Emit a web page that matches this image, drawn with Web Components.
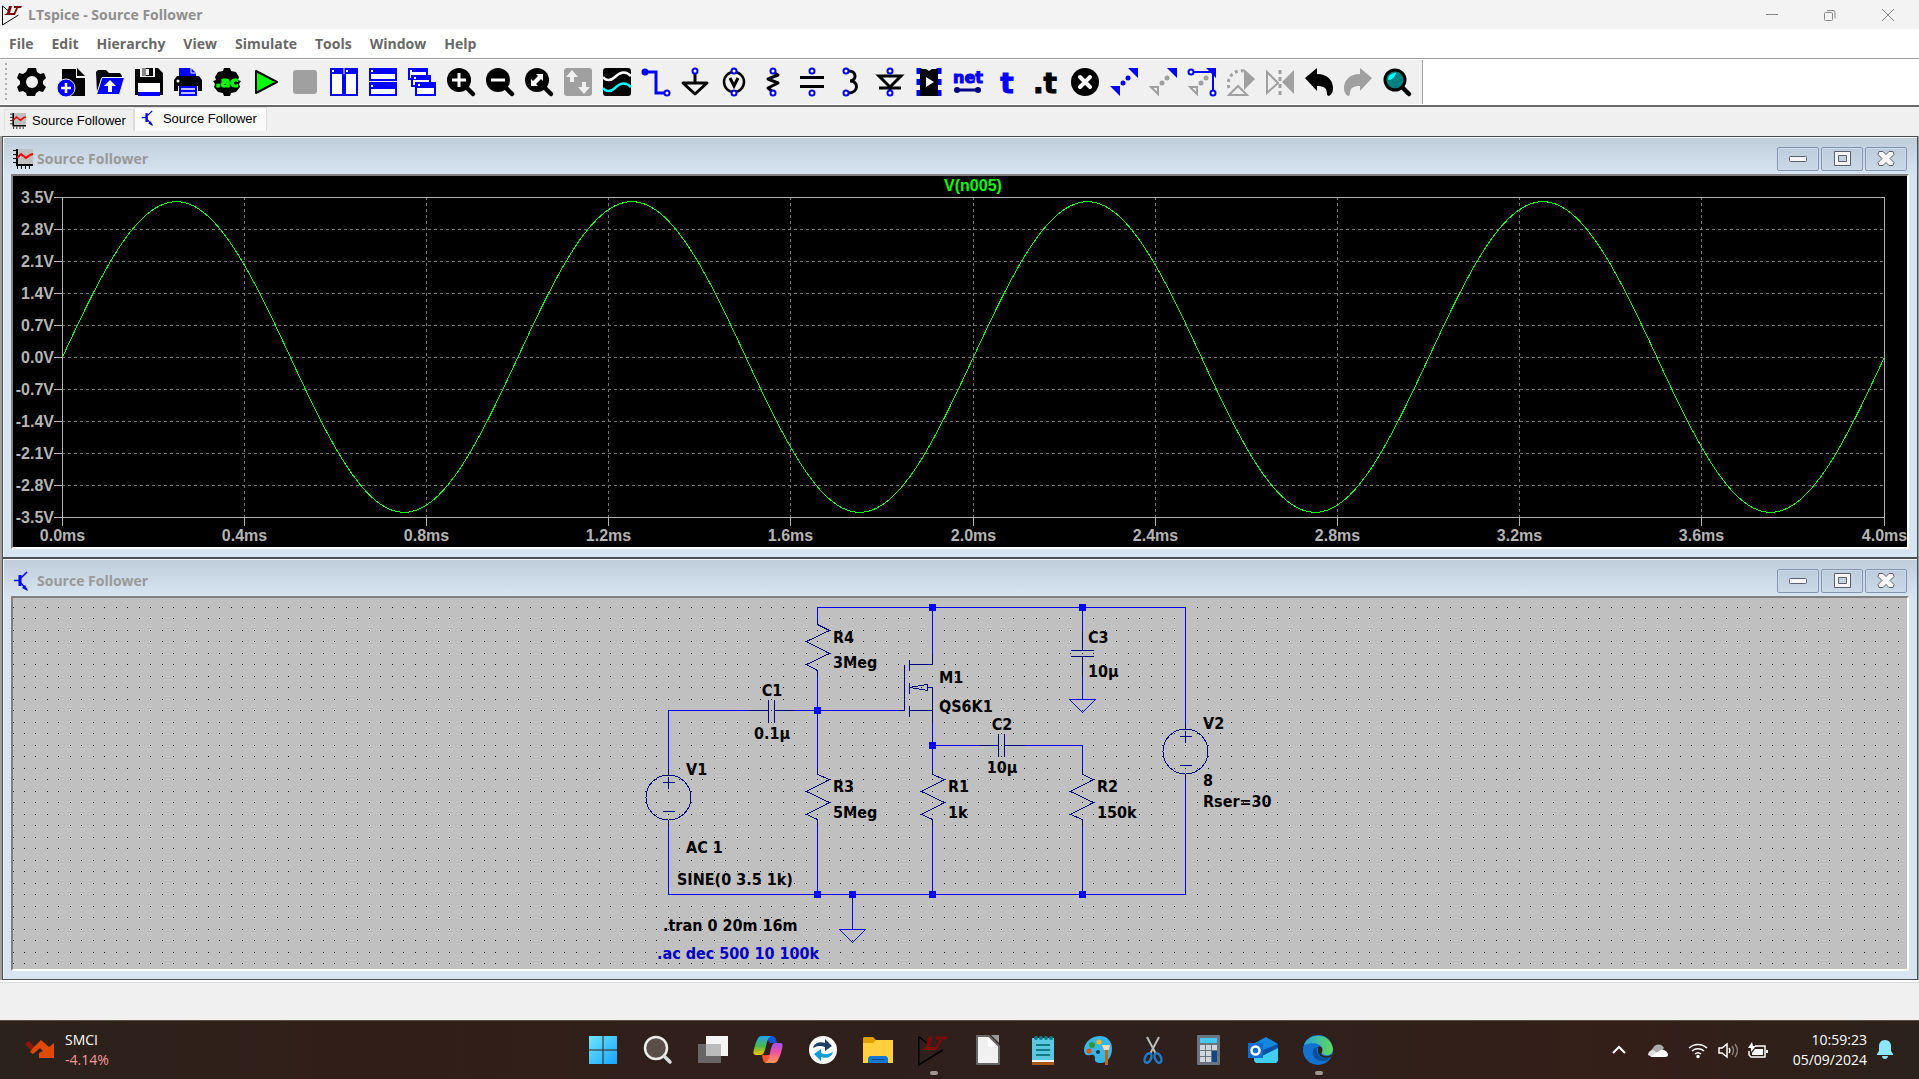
<!DOCTYPE html>
<html lang="en">
<head>
<meta charset="utf-8">
<title>LTspice - Source Follower</title>
<style>
    html, body {
        margin: 0;
        height: 100%;
        overflow: hidden;
    }
    body {
        display: flex;
        flex-direction: column;
        background: #f0f0f0;
        font: 700 14px "Open Sans", "Noto Sans", sans-serif;
    }
    main {
        flex: 1;
        min-height: 0;
        display: flex;
        flex-direction: column;
        padding: 0 1px 0 2px;
        background: #a0a0a0;
    }
    mdi-window {
        flex: 1;
        min-height: 0;
    }
</style>
</head>
<body>
<title-bar>LTspice - Source Follower</title-bar>
<menu-bar></menu-bar>
<tool-bar></tool-bar>
<tab-strip></tab-strip>
<main>
    <mdi-window icon="wave" caption="Source Follower"><wave-plot></wave-plot></mdi-window>
    <mdi-window icon="bjt" caption="Source Follower"><spice-schematic></spice-schematic></mdi-window>
</main>
<status-bar></status-bar>
<task-bar></task-bar>

<script>
const pin = (x, y) => `<circle cx="${x}" cy="${y}" r="2.5" fill="#fff" stroke="#00f" stroke-width="2"/>`
const dot = (x, y, r = 2.5) => `<circle cx="${x}" cy="${y}" r="${r}"/>`
const lens = `<circle cx="12" cy="12" r="12"/><path d="M19 19l7 7" stroke="#000" stroke-width="4.5" stroke-linecap="round"/>`
const glyph = (x, y, size, fill, text) =>
    `<text x="${x}" y="${y}" fill="${fill}" stroke="${fill}" stroke-width="1" text-anchor="middle" font-family="DejaVu Sans" font-weight="700" font-size="${size}">${text}</text>`

// toolbar icons, 28 x 28
const TOOLS = [
    ["Settings", `<path fill-rule="evenodd" d="M10 0h8l1 4 3 2 4-1 2 5-3 3v3l3 3-3 5-4-1-3 2-1 3h-8l-1-3-3-2-4 1-2-5 3-3v-3l-3-3 2-5 4 1 3-2zM14 8a6 6 0 1 0 0 12 6 6 0 0 0 0-12z"/>`],
    ["New schematic", `<path d="M5 1h14v9h9v18H5z"/><path d="M20 0l8 8h-8z"/><circle cx="9" cy="20" r="9" fill="#00f" stroke="#f0f0f0"/><path d="M9 15v10M4 20h10" stroke="#fff" stroke-width="2.5"/>`],
    ["Open", `<path d="M0 4l2-2h8l3 3h11l2 3v3H5L1 24z"/><path fill="#00f" stroke="#f0f0f0" d="M6 9.5h22.500l-5 17H.5z"/><path fill="#fff" d="M14 12l6 6h-4v6h-4v-6H8z"/>`],
    ["Save", `<path d="M0 1h5v8h15V0h3l5 5v22H0z"/><path fill="#888" d="M7 0h4v8H7z"/><path d="M11 0h7v8h-7z"/><path fill="#f0f0f0" d="M11 1h3v6h-3z"/><path fill="#fff" d="M3 15h22v9H3z"/><path fill="#00f" d="M3 24h22v4H3z"/>`],
    ["Print", `<path fill="#00f" d="M5 0h12l5 5v4H5z"/><path stroke="#fff" d="M17 0v5h5" fill="none"/><path d="M3 8h22l3 4v11h-4v-5H4v5H0V12z"/><circle cx="4" cy="13" r="1.5" fill="#fff"/><path fill="#00f" d="M5 18h18v10H5z"/><path stroke="#fff" stroke-width="1.5" d="M7 21h14M7 25h14"/>`],
    ["Simulation", `<path d="M11 0h6l1 3 5 1 3 5-1 3 3 1-2 3 1 3-4 5-5 1-1 3h-6l-1-3-5-1-4-5 1-3-2-3 3-1-1-3 3-5 5-1z"/>` + glyph(14, 19, 14, "#0f0", ".ac")],
    ["Run", `<path fill="#0f0" stroke="#000" stroke-width="2" stroke-linejoin="round" d="M4 3v22l21-11z"/>`],
    ["Stop", `<rect x="2" y="2" width="24" height="24" rx="3" fill="#a0a0a0"/>`],
    ["Tile vertically", `<path fill="#fff" stroke="#00f" stroke-width="2" d="M1 5h12v22H1zM15 5h12v22H15z"/><path fill="#00f" d="M0 0h28v6H0z"/><path fill="#fff" d="M2 2h2v2H2zM16 2h2v2h-2zM13.5 0h1v6h-1z"/>`],
    ["Tile horizontally", `<path fill="#fff" stroke="#00f" stroke-width="2" d="M1 1h26v11H1zM1 16h26v11H1z"/><path fill="#00f" d="M0 0h28v6H0zM0 14h28v7H0z"/><path fill="#fff" d="M2 2h2v2H2zM2 17h2v2H2z"/>`],
    ["Cascade", `<g fill="#fff" stroke="#00f" stroke-width="2"><path d="M1 1h18v10H1z"/><path d="M4 8h18v10H4z"/><path d="M8 15h19v12H8z"/></g><path fill="#00f" d="M0 0h20v4H0zM3 7h20v5H3zM7 14h21v6H7z"/><path fill="#fff" d="M2 2h2v2H2zM6 9h2v2H6zM10 16h2v2h-2z"/>`],
    ["Zoom in", lens + `<path d="M12 5v14M5 12h14" stroke="#fff" stroke-width="3"/>`],
    ["Zoom out", lens + `<path d="M5 12h14" stroke="#fff" stroke-width="3"/>`],
    ["Zoom to fit", lens + `<path fill="#fff" d="M11 6h7v7l-2-2-5 5 2 2H6v-7l2 2 5-5z"/>`],
    ["Autorange", `<rect width="28" height="28" rx="3" fill="#a0a0a0"/><path fill="#f0f0f0" d="M8 2l6 7h-4v5H6V9H2zM20 26l-6-7h4v-5h4v5h4z"/>`],
    ["Waveforms", `<rect width="28" height="28" rx="3"/><path fill="none" stroke="#fff" stroke-width="2.5" d="M0 9c3 4 8 4 12 0s10-7 16-1"/><path fill="none" stroke="#0ff" stroke-width="2.5" d="M0 20c3 4 8 4 12 0s10-7 16-1"/>`],
    ["Wire", `<path fill="none" stroke="#00f" stroke-width="3" d="M3 4h11v21h10"/><g fill="#00f">${dot(3, 4, 3.5)}</g>` + pin(25, 25)],
    ["Ground", `<path fill="none" stroke="#000" stroke-width="3" d="M14 4v10M2 15h24L14 26z" stroke-linejoin="round"/>` + pin(14, 3)],
    ["Voltage", `<circle cx="14" cy="14" r="10" fill="none" stroke="#000" stroke-width="2.5"/><path d="M10 10l4 8 4-8" fill="none" stroke="#000" stroke-width="3"/>` + pin(14, 3) + pin(14, 25)],
    ["Resistor", `<path fill="none" stroke="#000" stroke-width="3" stroke-linejoin="round" d="M14 4l5 3-10 4 10 4-10 5 5 4"/>` + pin(14, 3) + pin(14, 25)],
    ["Capacitor", `<path stroke="#000" stroke-width="3" d="M2 9.5h24M2 18.5h24"/>` + pin(14, 3) + pin(14, 25)],
    ["Inductor", `<path fill="none" stroke="#000" stroke-width="3" d="M11 3c9-1 9 10 2 10 9 0 9 12-2 12"/>` + pin(9, 3) + pin(9, 25)],
    ["Diode", `<path fill="none" stroke="#000" stroke-width="3" d="M3 8h22L14 19zM3 20h22M14 20v5"/>` + pin(14, 3) + pin(14, 25)],
    ["Component", `<path fill="none" stroke="#00f" stroke-width="5" stroke-dasharray="6 5" d="M4 0v28M24 0v28"/><path d="M5 1h6l3 2 3-2h6v27H5z"/><path fill="#fff" d="M11 9l8 5-8 5z"/>`],
    ["Label net", glyph(14, 15, 16, "#00f", "net") + `<path stroke="#000080" stroke-width="3" d="M2 22h24"/><g fill="#000080">${dot(3, 22, 3)}${dot(24, 22, 3)}</g>`],
    ["Text", glyph(14, 25, 28, "#00f", "t")],
    ["SPICE directive", glyph(13, 25, 28, "#000", ".t")],
    ["Delete", `<circle cx="14" cy="14" r="14"/><path stroke="#fff" stroke-width="4" stroke-linecap="round" d="M9 9l10 10M19 9L9 19"/>`],
    ["Move", `<g fill="#00f"><path d="M18 0h10v10zM0 18h10v10z"/>${dot(18, 10)}${dot(13, 15)}</g>`],
    ["Copy", `<g fill="#a0a0a0"><path fill="#00f" d="M18 0h10v10z"/><path fill="none" stroke="#a0a0a0" stroke-width="2" d="M2 19h7v7z"/>${dot(18, 10)}${dot(13, 15)}</g>`],
    ["Drag", `<g fill="#a0a0a0"><path fill="#00f" d="M18 0h10v10z"/><path fill="none" stroke="#a0a0a0" stroke-width="2" d="M2 19h7v7z"/>${dot(18, 10)}${dot(13, 15)}</g><path fill="none" stroke="#00f" stroke-width="2" d="M3 4h22v21"/>` + pin(3, 4) + pin(25, 25)],
    ["Rotate", `<g fill="none" stroke="#a0a0a0" stroke-width="3"><path d="M2 20a13 13 0 0 1 15-17" stroke-dasharray="3 3"/><path stroke-width="2" d="M2 27l9-9 9 9z"/></g><path fill="#a0a0a0" d="M17 1l11 10-11 11z"/>`],
    ["Mirror", `<path fill="none" stroke="#a0a0a0" stroke-width="2" d="M1 4v21l11-10z"/><path fill="#a0a0a0" d="M28 2v24L16 14z"/><path stroke="#a0a0a0" stroke-width="3" stroke-dasharray="4 3" d="M14 2v25"/>`],
    ["Undo", `<path d="M0 10L12 0v6c11 0 16 7 16 14 0 4-1 6-4 8-1 0-2-1-2-2 0-6-3-8-10-8v5z"/>`],
    ["Redo", `<path fill="#a0a0a0" d="M28 10L16 0v6C5 6 0 13 0 20c0 4 1 6 4 8 1 0 2-1 2-2 0-6 3-8 10-8v5z"/>`],
    ["Find", `<path d="M19 19l7 7" stroke="#000" stroke-width="4.5" stroke-linecap="round"/><circle cx="12" cy="12" r="10" fill="#008080" stroke="#000" stroke-width="3"/><path fill="#0ff" d="M5 12c0-5 4-7 8-7-1 4-4 7-8 7z"/>`],
]

const LOGO = `<path fill="none" stroke="#000" d="M.5 1v19l16-10M.5 1l6 5"/><path fill="#7a0a0a" d="M7 1h3L8 8h4l-1 2H2l3-2zM12 1h8l-1 2h-3l-3 7h-2l3-7h-2z"/>`

// 20 x 20 document icons
const DOCS = {
    wave: `<path fill="#c0c0c0" d="M3 0h17v16H3z"/><path fill="none" stroke="#000" stroke-width="2" d="M4 0v16h16"/><path stroke="#000" d="M0 1.5h3M0 5.5h3M0 9.5h3M0 13.5h3M4.5 17v3M8.5 17v3M12.5 17v3M16.5 17v3"/><path fill="none" stroke="#f00" stroke-width="2" d="M4 9l4-4 5 4 4-3 3-1"/>`,
    bjt: `<g fill="none" stroke="#00f" stroke-width="1.5"><path stroke-width="3" d="M7 4v11"/><path d="M1 9.5h6M8 7l6-6M8 12l6 7"/></g><path fill="#00f" d="M15 20l-6-3 3-3z"/>`,
}

// 30 x 30 taskbar icons
const APPS = [
    ["Start", `<defs><linearGradient id="a" x2="1" y2="1"><stop stop-color="#6ee7ff"/><stop offset="1" stop-color="#17a3ff"/></linearGradient></defs><path fill="url(#a)" d="M1 1h13.500v13.500H1zM15.500 1H29v13.500H15.500zM1 15.500h13.500V29H1zM15.500 15.500H29V29H15.500z"/>`],
    ["Search", `<circle cx="13" cy="13" r="11" fill="#5a4d4a" stroke="#eee" stroke-width="2.5"/><path stroke="#d8dde0" stroke-width="3.5" stroke-linecap="round" d="M21 21l6 6"/>`],
    ["Task view", `<path fill="#666" d="M0 9h23v19H0z"/><path fill="#f4f4f4" d="M8 1h22v20H8z"/><path fill="#bbb" d="M8 9h15v12H8z"/>`],
    ["Copilot", `<defs><linearGradient id="b" x2="0" y2="1"><stop stop-color="#1da5ef"/><stop offset=".55" stop-color="#4cb84a"/><stop offset="1" stop-color="#ffc400"/></linearGradient><linearGradient id="c" x2="0" y2="1"><stop stop-color="#a64df0"/><stop offset=".5" stop-color="#f0569a"/><stop offset="1" stop-color="#ff9a55"/></linearGradient></defs><path fill="#1554d8" d="M12 1h7c3 0 4 3 5 7h-7z"/><path fill="#f4532f" d="M9 20h9l-4 8c-4 0-4-3-5-8z"/><path fill="url(#b)" d="M9 1h9c-3 1-4 6-5 10s-2 9-5 9H3c-3 0-3-2-2-6s2-7 3-9 2-4 5-4z"/><path fill="url(#c)" d="M21 28h-9c3-1 4-6 5-10s2-10 5-10h5c3 0 3 2 2 6s-2 7-3 9-2 5-5 5z"/>`],
    ["Sync", `<circle cx="15" cy="15" r="14" fill="#fff"/><path fill="#1c3f66" d="M5 13c1-5 7-7 12-5V4l7 7-7 5v-4c-5-2-8-1-12 1z"/><path fill="#109bdc" d="M25 17c-1 5-7 7-12 5v4l-7-7 7-5v4c5 2 8 1 12-1z"/>`],
    ["File Explorer", `<path fill="#e0a000" d="M0 3l1-1h9l3 3h15v5H0z"/><path fill="#ffcf3d" d="M0 8h10l3-3h17v23H0z"/><path fill="#0f78d4" d="M5 28v-5l2-2h16l2 2v5z"/><path stroke="#084a8e" d="M9 24.500h12"/>`],
    ["LTspice", `<g transform="scale(1.5)">${LOGO}</g>`, true],
    ["LibreOffice", `<path fill="#f1f1f1" stroke="#666" stroke-width="2" stroke-linejoin="round" d="M4 1h12l10 10v18H4z"/><path fill="#999" d="M18 0h8v8z"/><path fill="#fff" d="M15 3v9h9z"/>`],
    ["Notepad", `<path fill="#5cc8e0" d="M4 3h22v24H4z"/><path fill="#fff" d="M4 25h22v2H4z"/><path fill="#a85a10" d="M4 27h22v3H4z"/><path stroke="#117a86" stroke-width="2" d="M8 10h14M8 15h14M8 20h14"/><g fill="#117a86">${dot(8, 3, 2)}${dot(13, 3, 2)}${dot(18, 3, 2)}${dot(23, 3, 2)}</g>`],
    ["Paint", `<path fill="#38b6e8" d="M17 1c8 0 12 6 12 13 0 8-5 14-11 14-4 0-7-1-6-5 0-3-2-4-5-3-4 1-6-1-6-5C1 7 9 1 17 1z"/><circle cx="9" cy="10" r="3" fill="#2d9c2d"/><circle cx="16" cy="7" r="2.5" fill="#ffba19"/><circle cx="6" cy="16" r="2.5" fill="#e05018"/><circle cx="15" cy="17" r="2" fill="#0a3a55"/><path fill="#b86a10" d="M22 15h3v15h-3z"/><path fill="#f2d9b8" d="M19 10h8l-1 5h-5z"/>`],
    ["Snipping Tool", `<path stroke="#bbb" stroke-width="2" d="M9 2l9 17M21 2l-9 17"/><g fill="none" stroke="#1f78c8" stroke-width="2.5"><ellipse cx="10" cy="23" rx="3" ry="5" transform="rotate(25 10 23)"/><ellipse cx="20" cy="23" rx="3" ry="5" transform="rotate(-25 20 23)"/></g>`],
    ["Calculator", `<rect x="4" width="23" height="30" rx="1" fill="#6c7480"/><path fill="#43c7f4" d="M7 3h17v5H7z"/><path fill="#cfd6dd" d="M7 10h5v5H7zM13 10h5v5h-5zM19 10h5v5h-5zM7 16h5v5H7zM13 16h5v5h-5zM7 22h5v5H7zM13 22h5v5h-5z"/><path fill="#0f4a86" d="M19 16h5v11h-5z"/>`],
    ["Outlook", `<path fill="#1388dd" d="M5 9l13-7 12 7v10H5z"/><path fill="#0b50a4" d="M10 17L30 9v8l-14 6z"/><path fill="#40cdf8" d="M6 19l8 2 16-8v13l-2 2H8l-2-2z"/><path fill="#0f6cce" d="M0 8h15v15H0z"/><circle cx="7.5" cy="15.5" r="4" fill="none" stroke="#fff" stroke-width="2.5"/>`],
    ["Edge", `<defs><linearGradient id="d" x2="1"><stop stop-color="#25a5e2"/><stop offset="1" stop-color="#62d957"/></linearGradient></defs><circle cx="15" cy="15" r="15" fill="#1173cf"/><path fill="url(#d)" d="M1 10C5-3 28-3 30 14c0 5-4 7-8 6-5-1-2-4-3-7C17 8 9 7 1 10z"/><path fill="#0c4f9e" d="M11 13c-4 7 2 14 10 13 3 0 5-2 6-4-6 2-12 0-13-5-1-2 0-3 1-5-2 0-3 0-4 1z"/><path fill="#2f201c" d="M15 12c4-2 6 3 3 7 3 3 7 3 12 0l-2 3c-6 2-13 0-13-6z"/>`, true],
]

const svg = (inner, w, h = w, vw = w, vh = h) =>
    `<svg width="${w}" height="${h}" viewBox="0 0 ${vw} ${vh}" aria-hidden="true">${inner}</svg>`

class Base extends HTMLElement {
    connectedCallback() {
        if (this.shadowRoot) return
        this.attachShadow({mode: "open"}).innerHTML = `<style>
            button { font: inherit; color: inherit; border: 0; padding: 0; background: none; }
            svg { display: block; overflow: visible; }
            ${this.css}
        </style>${this.html}`
        if (this.draw) new ResizeObserver(() => this.draw()).observe(this)
    }
}

customElements.define("title-bar", class extends Base {
    css = `
        :host { display: flex; align-items: center; height: 29px; padding: 0 2px; background: #f3f3f3; color: #8f8f8f; }
        .name { flex: 1; margin-left: 6px; }
        button { width: 58px; height: 29px; display: grid; place-items: center; }
        button svg { fill: none; stroke: #888; }
    `
    html = `${svg(LOGO, 20)}<span class="name"><slot></slot></span>
        <button aria-label="Minimize">${svg('<path d="M0 5.5h12"/>', 12)}</button>
        <button aria-label="Restore">${svg('<rect x=".5" y="3.5" width="8" height="8" rx="1"/><path d="M3 1.500h6a2 2 0 0 1 2 2v6"/>', 12)}</button>
        <button aria-label="Close">${svg('<path d="M0 0l12 12M12 0L0 12"/>', 12)}</button>`
})

customElements.define("menu-bar", class extends Base {
    css = `
        :host { display: flex; height: 29px; border-bottom: 1px solid #a0a0a0; background: #fff; color: #686868; }
        button { padding: 0 9px; }
    `
    html = ["File", "Edit", "Hierarchy", "View", "Simulate", "Tools", "Window", "Help"]
        .map(m => `<button>${m}</button>`).join("")
})

customElements.define("tool-bar", class extends Base {
    css = `
        :host { display: flex; box-sizing: border-box; height: 48px; border-top: 1px solid #fff; border-bottom: 2px solid #696969; background: #fff; }
        .strip { display: flex; align-items: center; box-sizing: border-box; height: 44px; padding: 0 6px 0 5px; background: #f0f0f0; border-right: 1px solid #a0a0a0; }
        .grip { width: 2px; height: 38px; margin-right: 5px; background: repeating-linear-gradient(#b0b0b0 0 2px, #f0f0f0 2px 5px); }
        button { width: 39px; height: 40px; display: grid; place-items: center; }
    `
    html = `<div class="strip" role="toolbar"><span class="grip"></span>${
        TOOLS.map(([name, icon]) => `<button aria-label="${name}">${svg(icon, 28)}</button>`).join("")}</div>`
})

customElements.define("tab-strip", class extends Base {
    css = `
        :host { display: flex; align-items: flex-end; height: 29px; box-sizing: border-box; padding: 0 4px 5px; font: 13px "Liberation Sans", Arial, sans-serif; color: #000; }
        button { display: flex; align-items: center; gap: 6px; height: 22px; padding: 0 7px 0 5px; border: 1px solid #dfdfdf; border-bottom: 0; }
        button.active { height: 24px; padding: 0 9px 3px 6px; background: #fafafa; }
    `
    html = `<button>${svg(DOCS.wave, 16, 16, 20, 20)}Source Follower</button>
        <button class="active">${svg(DOCS.bjt, 16, 16, 20, 20)}Source Follower</button>`
})

customElements.define("mdi-window", class extends Base {
    css = `
        :host { display: flex; flex-direction: column; box-sizing: border-box; border: 1px solid #4b4f54; padding: 0 8px 8px; background: linear-gradient(#bfcddb, #d7e4f2 37px); box-shadow: inset 1px 1px #f3f8fc; }
        header { display: flex; align-items: center; gap: 2px; box-sizing: border-box; height: 37px; padding: 6px 2px 0; color: #999; }
        .name { flex: 1; margin-left: 2px; }
        header button { width: 42px; height: 24px; border: 1px solid #8495b3; border-radius: 2px; background: linear-gradient(#bdccdb, #cbd9e7); display: grid; place-items: center; box-shadow: inset 0 0 0 1px #ccd9e6; }
        header button svg { fill: #f6f6f6; stroke: #5a6070; }
        .client { flex: 1; min-height: 0; border: solid; border-width: 2px; border-color: #808080 #fff #fff #808080; overflow: hidden; }
    `
    get html() {
        return `<header>${svg(DOCS[this.getAttribute("icon")], 20)}<span class="name">${this.getAttribute("caption")}</span>
            <button aria-label="Minimize">${svg('<rect x=".5" y="6.5" width="17" height="5" rx="1"/>', 18)}</button>
            <button aria-label="Maximize">${svg('<path fill-rule="evenodd" d="M1.500 1.500h16v14h-16zM5.500 5.500v6h8v-6z"/>', 18)}</button>
            <button aria-label="Close">${svg('<path d="M2 1.500h4l3 3 3-3h4l1 3-4 4 4 4-1 3h-4l-3-3-3 3H2l-1-3 4-4-4-4z"/>', 18)}</button>
        </header><div class="client"><slot></slot></div>`
    }
})

customElements.define("wave-plot", class extends Base {
    css = `
        :host { display: block; height: 100%; background: #000; }
        svg { width: 100%; height: 100%; font: 700 16px "Liberation Sans", Arial, sans-serif; }
        path { fill: none; shape-rendering: crispEdges; }
        .grid { stroke: #747474; stroke-dasharray: 3 3; }
        .frame { stroke: #b4b4b4; }
        .trace { stroke: #0f0; }
        text { fill: #b4b4b4; text-anchor: middle; }
        .volts { text-anchor: end; }
        .name { fill: #0f0; }
    `
    html = `<svg></svg>`

    draw() {
        const w = this.clientWidth, h = this.clientHeight
        const left = 49, right = w - 23, top = 21, bottom = h - 30
        const dx = (right - left) / 10, dy = (bottom - top) / 10
        const half = v => Math.floor(v) + .5
        let grid = "", frame = `M${left + .5} ${top + .5}H${right + .5}V${bottom + .5}H${left + .5}z`, labels = ""

        for (let i = 0; i <= 10; i++) {
            const x = half(left + i * dx), y = half(top + i * dy)
            if (i > 0 && i < 10) grid += `M${x} ${top}V${bottom}M${left} ${y}H${right}`
            frame += `M${left - 8} ${y}H${left}M${x} ${bottom}v9`
            labels += `<text class="volts" x="${left - 8}" y="${y + 5.5}">${(3.5 - .7 * i).toFixed(1).replace("-0.0", "0.0")}V</text>
                <text x="${x}" y="${bottom + 24}">${(.4 * i).toFixed(1)}ms</text>`
        }

        // four periods of a 1 kHz sine, 3.4 V peak
        const mid = (top + bottom) / 2, amp = (bottom - top) / 2 * 3.4 / 3.5
        const points = []
        for (let i = 0; i <= 320; i++) {
            points.push((left + .5 + (right - left) * i / 320).toFixed(1) + " " + (mid - amp * Math.sin(i / 320 * 8 * Math.PI)).toFixed(1))
        }
        this.shadowRoot.querySelector("svg").innerHTML = `
            <path class="grid" d="${grid}"/><path class="frame" d="${frame}"/>
            <path class="trace" d="M${points.join("L")}"/>${labels}
            <text class="name" x="${(left + right) / 2}" y="15">V(n005)</text>`
    }
})

// symbol outlines in schematic units, 16 to a grid step
const SYMBOLS = {
    res: [[16,16,16,24,32,32,0,48,32,64,0,80,16,88,16,96]],
    cap: [[16,0,16,28], [0,28,32,28], [0,36,32,36], [16,36,16,64]],
    capH: [[0,16,28,16], [28,0,28,32], [36,0,36,32], [36,16,64,16]],
    voltage: [[0,16,0,24], [0,88,0,96], [-8,36,8,36], [0,28,0,44], [-8,76,8,76]],
    nmos: [[0,80,8,80,8,16], [16,8,16,24], [16,40,16,56], [16,72,16,88], [48,0,48,16,16,16],
        [16,80,48,80], [48,96,48,48,40,48], [16,48,40,44,40,52,16,48]],
}
const PARTS = [
    ["res", 1104, 0], ["res", 1104, 208], ["res", 1264, 208], ["res", 1472, 208],
    ["capH", 1024, 128], ["capH", 1344, 176], ["cap", 1472, 32],
    ["voltage", 912, 208], ["voltage", 1632, 144], ["nmos", 1232, 64],
]
const WIRES = [
    [1120,16,1120,0,1632,0,1632,160], [1632,240,1632,400,912,400,912,304], [912,224,912,144,1024,144],
    [1088,144,1232,144], [1120,96,1120,224], [1120,304,1120,400], [1280,0,1280,64], [1280,160,1280,224],
    [1280,304,1280,400], [1280,192,1344,192], [1408,192,1488,192,1488,224], [1488,304,1488,400],
    [1488,0,1488,32], [1488,96,1488,128], [1168,400,1168,448],
    [1470,128,1506,128,1488,146,1470,128], [1150,448,1186,448,1168,466,1150,448],
]
const NODES = [[1280,0], [1488,0], [1120,144], [1280,192], [1120,400], [1168,400], [1280,400], [1488,400]]
const LABELS = [
    [1140, 40, "R4"], [1140, 76, "3Meg"], [1140, 248, "R3"], [1140, 284, "5Meg"],
    [1300, 248, "R1"], [1300, 284, "1k"], [1508, 248, "R2"], [1508, 284, "150k"],
    [1055, 114, "C1", "mid"], [1055, 174, "0.1µ", "mid"], [1375, 162, "C2", "mid"], [1375, 222, "10µ", "mid"],
    [1496, 40, "C3"], [1496, 88, "10µ"], [1288, 96, "M1"], [1288, 136, "QS6K1"],
    [936, 224, "V1"], [936, 333, "AC 1"], [924, 378, "SINE(0 3.5 1k)"],
    [1656, 160, "V2"], [1656, 240, "8"], [1656, 269, "Rser=30"],
    [904, 441, ".tran 0 20m 16m"], [896, 481, ".ac dec 500 10 100k", "note"],
]

customElements.define("spice-schematic", class extends Base {
    css = `
        :host { display: block; height: 100%; background: #c0c0c0; }
        svg { width: 100%; height: 100%; font: 700 16px "DejaVu Sans Condensed", "Noto Sans", sans-serif; }
        path, circle { fill: none; shape-rendering: crispEdges; }
        .dots { fill: #000; }
        .wire { stroke: #00f; }
        .part { stroke: #000080; }
        .node { fill: #00f; }
        .mid { text-anchor: middle; }
        .note { fill: #0000c8; }
    `
    html = `<svg></svg>`

    draw() {
        const step = 11.497
        const X = u => Math.floor(u * step / 16)
        const Y = u => Math.floor(9.3 + u * step / 16)
        const line = (p, ox = 0, oy = 0) => {
            let d = ""
            for (let i = 0; i < p.length; i += 2) d += `${i ? "L" : "M"}${X(p[i] + ox) + .5} ${Y(p[i + 1] + oy) + .5}`
            return d
        }
        let dots = ""
        for (let y = 0; Y(y) < this.clientHeight; y += 16) {
            for (let x = 0; X(x) < this.clientWidth - 4; x += 16) dots += `M${X(x)} ${Y(y)}h1v1h-1z`
        }
        const parts = PARTS.map(([name, x, y]) => SYMBOLS[name].map(p => line(p, x, y)).join("")).join("")
        this.shadowRoot.querySelector("svg").innerHTML = `
            <path class="dots" d="${dots}"/>
            <path class="wire" d="${WIRES.map(p => line(p)).join("")}"/>
            <path class="part" d="${parts}"/>
            ${PARTS.filter(p => p[0] == "voltage").map(([, x, y]) => `<circle class="part" cx="${X(x) + .5}" cy="${Y(y + 56) + .5}" r="22.5"/>`).join("")}
            <path class="node" d="${NODES.map(([x, y]) => `M${X(x) - 3} ${Y(y) - 3}h7v7h-7z`).join("")}"/>
            ${LABELS.map(([x, y, text, cls = ""]) => `<text class="${cls}" x="${X(x) + 1}" y="${Y(y) + 7}">${text}</text>`).join("")}`
    }
})

customElements.define("status-bar", class extends Base {
    css = `:host { display: block; height: 40px; box-sizing: border-box; border-top: 2px solid #fff; background: #f0f0f0; box-shadow: inset 0 1px #dcdcdc; }`
    html = ``
})

customElements.define("task-bar", class extends Base {
    css = `
        :host { display: grid; grid-template-columns: 1fr auto 1fr; align-items: center; height: 59px; box-sizing: border-box; border-top: 1px solid #5a4f49;
            background: linear-gradient(90deg, #2b221b, #321e19 18%, #2e201c 60%, #341e18 85%, #2b221b); color: #fff; font: 14px/20px "Open Sans", "Noto Sans", sans-serif; }
        .stock { display: flex; align-items: center; gap: 10px; padding-left: 25px; text-align: left; justify-self: start; }
        .stock span span { display: block; color: #f39a9a; }
        .apps { display: flex; padding-left: 2px; }
        .apps button { position: relative; width: 55px; height: 58px; display: grid; place-items: center; }
        .apps .open::after { content: ""; position: absolute; bottom: 4px; left: 24px; width: 8px; height: 4px; border-radius: 2px; background: #a0968f; }
        .tray { display: flex; align-items: center; justify-self: end; gap: 10px; padding-right: 26px; }
        .tray button:first-child { margin-right: 12px; }
        .cloud { margin-right: 10px; }
        .clock { margin-left: 15px; text-align: right; }
        .clock time { display: block; }
        .tray svg { fill: none; stroke: #fff; stroke-width: 1.5; }
    `
    html = `
        <button class="stock">${svg('<path fill="#8c1608" d="M0 4l4-3 7 7-4 4z"/><path fill="#e04a00" d="M8 8l8-8 8 7 5-4v15H14v-5l4-2-3-3-7 6-3-2z"/>', 30, 20)}<span>SMCI<span>-4.14%</span></span></button>
        <nav class="apps">${APPS.map(([name, icon, open]) => `<button aria-label="${name}"${open ? ' class="open"' : ""}>${svg(icon, 30)}</button>`).join("")}</nav>
        <div class="tray">
            <button aria-label="Show hidden icons">${svg('<path stroke-width="2" d="M1 10l6-6 6 6"/>', 14)}</button>
            <button class="cloud" aria-label="OneDrive">${svg('<g stroke="none"><path fill="#aaa" d="M5 13a5 5 0 0 1 0-8 6 6 0 0 1 11 0l-4 5z"/><path fill="#ddd" d="M0 12a5 5 0 0 1 5-5l10 6H2z"/><path fill="#fff" d="M2 14l9-6a6 6 0 0 1 5-1c3 1 4 3 4 5 0 1-1 2-3 2H3z"/></g>', 20, 15)}</button>
            <button aria-label="Network">${svg('<path d="M1 6a13 13 0 0 1 18 0M4 9a9 9 0 0 1 12 0M7 12a4.500 4.500 0 0 1 6 0"/><circle cx="10" cy="14.5" r="1" fill="#fff"/>', 20, 17)}</button>
            <button aria-label="Volume">${svg('<path d="M1 6h3l5-4v13l-5-4H1zM11 6c1 1 1 4 0 5"/><path stroke="#8b7f7b" d="M14 4c2 3 2 6 0 9M17 2c3 4 3 9 0 13"/>', 20, 17)}</button>
            <button aria-label="Battery">${svg('<path d="M7 4h10v11H3l-2-2V9"/><path stroke="none" fill="#fff" d="M7 7h8v6H4v-2zM18 8h2v3h-2zM4 0L0 6h3v4l5-6H5z"/>', 20, 17)}</button>
            <div class="clock"><time>10:59:23</time><time>05/09/2024</time></div>
            <button aria-label="Notifications">${svg('<path stroke="none" fill="#8fe6ff" d="M8 0c4 0 6 3 6 6v5l2 3v1H0v-1l2-3V6c0-3 2-6 6-6zM5 16h6c0 4-6 4-6 0z"/>', 16, 20)}</button>
        </div>`
})
</script>
</body>
</html>
